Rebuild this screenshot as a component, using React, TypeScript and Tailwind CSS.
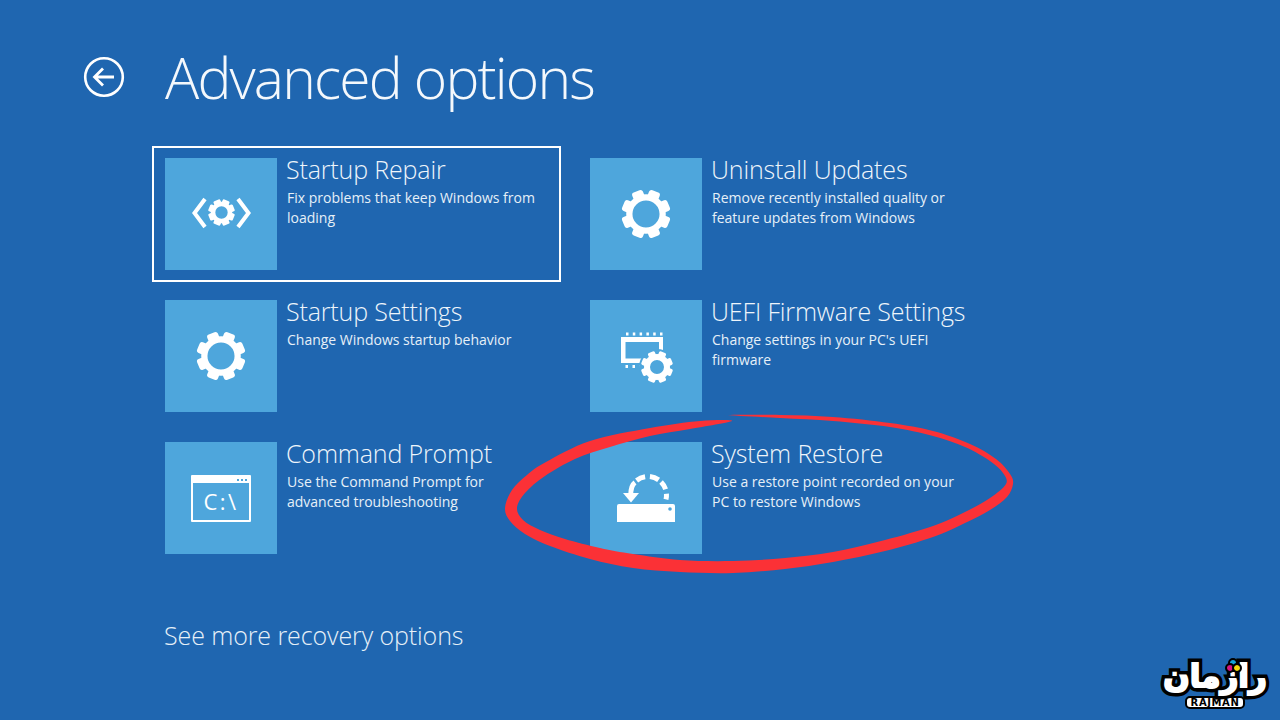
const FONT = "font-['Open_Sans',sans-serif]";
const TEETH = [22.5, 67.5, 112.5, 157.5, 202.5, 247.5, 292.5, 337.5];

function Gear({ size, ring = 6, tooth = 11 }: { size: number; ring?: number; tooth?: number }) {
  // 8 teeth, rotated so two of them sit side by side at the top
  return (
    <svg width={size} height={size} viewBox="0 0 48 48" fill="none">
      <circle cx="24" cy="24" r={19 - ring / 2} stroke="#fff" strokeWidth={ring} />
      {TEETH.map((a) => (
        <rect key={a} x={24 - tooth / 2} y="0.5" width={tooth} height="10" rx="2.5" fill="#fff" transform={`rotate(${a} 24 24)`} />
      ))}
    </svg>
  );
}

function RepairIcon() {
  return (
    <div className="-mt-[3px] flex items-center gap-px">
      <svg width="16" height="32" viewBox="0 0 16 32" fill="none">
        <path d="M14 2 3.500 16 14 30" stroke="#fff" strokeWidth="4" />
      </svg>
      <Gear size={27} ring={8} tooth={13} />
      <svg width="16" height="32" viewBox="0 0 16 32" fill="none">
        <path d="M2 2l10.500 14L2 30" stroke="#fff" strokeWidth="4" />
      </svg>
    </div>
  );
}

function FirmwareIcon() {
  return (
    <svg className="mt-[3px] ml-[4px]" width="54" height="52" viewBox="0 0 54 52" fill="none">
      <path d="M5 2h2.500M11.800 2h2.500M18.600 2h2.500M25.400 2h2.500M32.200 2h2.500M39 2h2.500" stroke="#fff" strokeWidth="3" />
      <path d="M4.500 34.500H7M11.500 34.500H14M18.500 34.500H21" stroke="#fff" strokeWidth="3" />
      <path d="M0 5h42v26H0zM4.500 10v16.500H38V10z" fill="#fff" fillRule="evenodd" />
      <circle cx="36" cy="35" r="18" fill="#4ea6dc" />
      <g transform="translate(20 19)">
        <svg width="32" height="32" viewBox="0 0 48 48" fill="none">
          <circle cx="24" cy="24" r="15" stroke="#fff" strokeWidth="9" />
          {TEETH.map((a) => (
            <rect key={a} x="18.500" y="0" width="11" height="11" rx="2.500" fill="#fff" transform={`rotate(${a} 24 24)`} />
          ))}
        </svg>
      </g>
    </svg>
  );
}

function PromptIcon() {
  return (
    <div className="flex h-[47px] w-[60px] flex-col rounded-[1px] border-2 border-white">
      <div className="flex h-[6px] items-center justify-end gap-[2px] bg-white pr-[2px]">
        <span className="size-[2px] bg-[#4ea6dc]" />
        <span className="size-[2px] bg-[#4ea6dc]" />
        <span className="size-[2px] bg-[#4ea6dc]" />
      </div>
      <div className={`flex flex-1 items-center justify-center text-[22px] leading-none tracking-[2.5px] text-white ${FONT}`}>C:\</div>
    </div>
  );
}

function arc(a0: number, a1: number) {
  const pt = (a: number) => {
    const r = (a * Math.PI) / 180;
    return `${32 + 18.5 * Math.sin(r)} ${22 - 18.5 * Math.cos(r)}`;
  };
  return `M${pt(a0)}A18.500 18.500 0 0 1 ${pt(a1)}`;
}

function RestoreIcon() {
  return (
    <svg width="60" height="50" viewBox="0 0 60 50" fill="none">
      {[[-38, -9], [6, 35], [45, 72], [86, 104]].map(([a, b]) => (
        <path key={a} d={arc(a, b)} stroke="#fff" strokeWidth="5" />
      ))}
      <path d="M19 9.500c-3.500 2.500-4.300 6-4.300 13" stroke="#fff" strokeWidth="5" />
      <path d="M7 20h16l-8 9.500z" fill="#fff" />
      <path d="M3 31h54a2 2 0 0 1 2 2v16H1V33a2 2 0 0 1 2-2z" fill="#fff" />
      <circle cx="54" cy="36" r="1.800" fill="#4ea6dc" />
    </svg>
  );
}

function Option({ title, lines, icon, selected }: { title: string; lines: string[]; icon: React.ReactNode; selected?: boolean }) {
  return (
    <div className={`flex h-[136px] w-[409px] gap-[9px] border-2 py-[10px] pl-[11px] ${selected ? "border-white" : "border-transparent"}`}>
      <div className="flex size-[112px] shrink-0 items-center justify-center bg-[#4ea6dc]">{icon}</div>
      <div className="-mt-[4px] flex flex-col">
        <div className="text-[25px] leading-[30px] font-light tracking-[-0.15px] text-[#eef5fb]">{title}</div>
        <div className="mt-[4px] pl-px text-[14px] leading-[20px] text-[#e6f0f8]">
          {lines.map((l) => (
            <div key={l}>{l}</div>
          ))}
        </div>
      </div>
    </div>
  );
}

// Catmull-Rom through the traced outline of the hand-drawn marker ring
function smooth(pts: number[][]) {
  let d = `M${pts[0][0]} ${pts[0][1]}`;
  for (let i = 0; i < pts.length - 1; i++) {
    const p0 = pts[Math.max(i - 1, 0)];
    const p1 = pts[i];
    const p2 = pts[i + 1];
    const p3 = pts[Math.min(i + 2, pts.length - 1)];
    d += `C${p1[0] + (p2[0] - p0[0]) / 6} ${p1[1] + (p2[1] - p0[1]) / 6} ${p2[0] - (p3[0] - p1[0]) / 6} ${p2[1] - (p3[1] - p1[1]) / 6} ${p2[0]} ${p2[1]}`;
  }
  return d;
}

const RING = [
  [724, 415], [780, 415], [833, 417], [890, 423], [933, 431], [970, 444], [996, 459], [1010, 474], [1013, 484], [1007, 497],
  [990, 510], [965, 523], [933, 537], [885, 551], [833, 562], [785, 569], [733, 573], [680, 572], [633, 568], [590, 559],
  [550, 546], [525, 534], [510, 521], [505, 508], [512, 490], [527, 475], [546, 462], [590, 441], [650, 428], [700, 421], [732, 421],
  [690, 429], [650, 436], [610, 447], [575, 459], [545, 476], [525, 493], [517, 508], [523, 520], [540, 530], [565, 539],
  [600, 548], [633, 554], [680, 560], [733, 561], [785, 558], [833, 552], [885, 540], [933, 526], [965, 512], [990, 498], [1006, 484],
  [1003, 473], [990, 461], [965, 447], [933, 436], [890, 427], [833, 421], [780, 418], [724, 415],
];

function Logo() {
  const word = "font-['DejaVu_Sans',sans-serif] text-[31px] leading-none font-bold";
  return (
    <div className="absolute top-[657px] left-[1160px] flex w-[110px] flex-col items-center">
      <div className="relative flex h-[38px] items-center" dir="rtl">
        <div className={`${word} text-black [-webkit-text-stroke:9px_#000]`}>رازمان</div>
        <div className={`${word} absolute text-white [-webkit-text-stroke:2px_#fff]`} aria-hidden="true">رازمان</div>
      </div>
      <span className="absolute top-[3px] left-[70px] size-[6px] rounded-full bg-[#13a5d8] outline-2 outline-black" />
      <span className="absolute top-[8px] left-[67px] size-[6px] rounded-full bg-[#d8127e] outline-2 outline-black" />
      <span className="absolute top-[8px] left-[74px] size-[6px] rounded-full bg-[#f5d90a] outline-2 outline-black" />
      <div className="mt-[1px] rounded-[5px] border-2 border-black bg-white px-[4px] text-[10px] leading-[9px] font-bold tracking-[0.6px] text-black font-['DejaVu_Sans',sans-serif]">
        RAJMAN
      </div>
    </div>
  );
}

export default function App() {
  return (
    <div className={`relative h-[720px] w-[1280px] overflow-hidden bg-[#1f66b0] text-white ${FONT}`}>
      <div className="flex items-center pt-[37px] pl-[83px]">
        <svg width="42" height="42" viewBox="0 0 42 42" fill="none" stroke="#fff">
          <circle cx="21" cy="21" r="18.800" strokeWidth="2.600" />
          <path d="M31 21H12M20 12.500 11.500 21l8.500 8.500" strokeWidth="2.800" />
        </svg>
        <h1 className="ml-[40px] text-[57px] leading-[80px] font-light tracking-[-1.830px] text-[#f4f8fc]">Advanced options</h1>
      </div>

      <div className="mt-[29px] ml-[152px] grid w-[835px] grid-cols-[409px_409px] gap-x-[16px] gap-y-[6px]">
        <Option selected title="Startup Repair" lines={["Fix problems that keep Windows from", "loading"]} icon={<RepairIcon />} />
        <Option title="Uninstall Updates" lines={["Remove recently installed quality or", "feature updates from Windows"]} icon={<Gear size={50} />} />
        <Option title="Startup Settings" lines={["Change Windows startup behavior"]} icon={<Gear size={50} />} />
        <Option title="UEFI Firmware Settings" lines={["Change settings in your PC's UEFI", "firmware"]} icon={<FirmwareIcon />} />
        <Option title="Command Prompt" lines={["Use the Command Prompt for", "advanced troubleshooting"]} icon={<PromptIcon />} />
        <Option title="System Restore" lines={["Use a restore point recorded on your", "PC to restore Windows"]} icon={<RestoreIcon />} />
      </div>

      <div className="mt-[51px] ml-[164px] text-[25px] leading-[36px] font-light tracking-[-0.100px] text-[#e6f0f8]">See more recovery options</div>

      <svg className="absolute inset-0" width="1280" height="720" viewBox="0 0 1280 720">
        <path d={smooth(RING)} fill="#fb3136" fillRule="evenodd" />
      </svg>
      <Logo />
    </div>
  );
}
